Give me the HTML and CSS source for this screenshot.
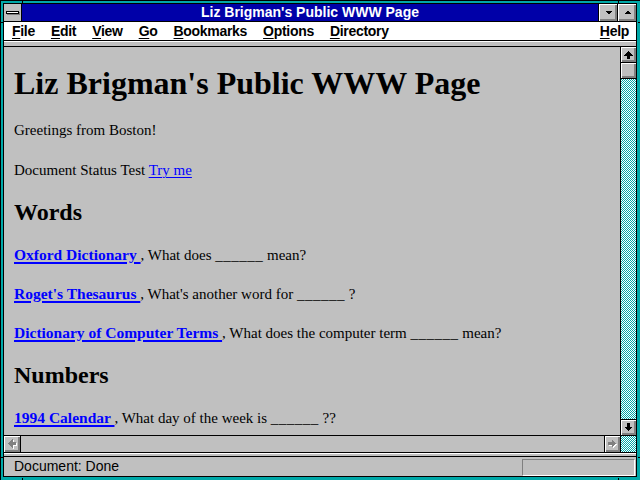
FILE: index.html
```html
<!DOCTYPE html>
<html lang="en">
<head>
  <meta charset="UTF-8">
  <meta name="viewport" content="width=device-width, initial-scale=1.0">
  <title>Liz Brigman's Public WWW Page</title>
  <link rel="stylesheet" href="styles.css">
</head>
<body>
  <svg class="defs">
    <pattern id="dither" width="2" height="2" patternUnits="userSpaceOnUse">
      <rect width="2" height="2" fill="#fff"/>
      <rect width="1" height="1" fill="#00a8a8"/>
      <rect x="1" y="1" width="1" height="1" fill="#00a8a8"/>
    </pattern>
  </svg>

  <div class="window">
    <span class="mark mark-v" style="left: 21px; top: 0;"></span>
    <span class="mark mark-v" style="left: 617px; top: 0;"></span>
    <span class="mark mark-v" style="left: 21px; top: 477px;"></span>
    <span class="mark mark-v" style="left: 617px; top: 477px;"></span>
    <span class="mark mark-h" style="left: 0; top: 21px;"></span>
    <span class="mark mark-h" style="left: 637px; top: 21px;"></span>
    <span class="mark mark-h" style="left: 0; top: 456px;"></span>
    <span class="mark mark-h" style="left: 637px; top: 456px;"></span>

    <div class="frame">
      <div class="titlebar">
        <div class="sysbox"><div class="sysbar"></div></div>
        <div class="title">Liz Brigman's Public WWW Page</div>
        <div class="tbtn">
          <svg width="17" height="17" viewBox="0 0 17 17" shape-rendering="crispEdges">
            <polygon points="5,7 12,7 8.5,10.5" fill="#000"/>
          </svg>
        </div>
        <div class="tbtn">
          <svg width="17" height="17" viewBox="0 0 17 17" shape-rendering="crispEdges">
            <polygon points="5,10 12,10 8.5,6.5" fill="#000"/>
          </svg>
        </div>
      </div>

      <div class="menubar">
        <span><u>F</u>ile</span>
        <span><u>E</u>dit</span>
        <span><u>V</u>iew</span>
        <span><u>G</u>o</span>
        <span><u>B</u>ookmarks</span>
        <span><u>O</u>ptions</span>
        <span><u>D</u>irectory</span>
        <span class="help"><u>H</u>elp</span>
      </div>
      <div class="strip"></div>

      <div class="main">
        <div class="content">
          <h1>Liz Brigman's Public WWW Page</h1>
          <p>Greetings from Boston!</p>
          <p class="status-test">Document Status Test <a href="#" class="plain">Try me</a></p>
          <h2>Words</h2>
          <p><a href="#">Oxford Dictionary </a>, What does <span class="blank">______</span> mean?</p>
          <p><a href="#">Roget's Thesaurus </a>, What's another word for <span class="blank">______</span> ?</p>
          <p><a href="#">Dictionary of Computer Terms </a>, What does the computer term <span class="blank">______</span> mean?</p>
          <h2>Numbers</h2>
          <p><a href="#">1994 Calendar </a>, What day of the week is <span class="blank">______</span> ??</p>
        </div>
        <div class="vscroll">
          <div class="sbtn up">
            <svg width="15" height="15" viewBox="0 0 15 15" shape-rendering="crispEdges">
              <polygon points="7.5,4 12,8.5 9,8.5 9,12 6,12 6,8.5 3,8.5" fill="#000"/>
            </svg>
          </div>
          <div class="thumb"></div>
          <svg class="track"><rect width="100%" height="100%" fill="url(#dither)"/></svg>
          <div class="sbtn down">
            <svg width="15" height="15" viewBox="0 0 15 15" shape-rendering="crispEdges">
              <polygon points="7.5,11 12,6.5 9,6.5 9,3 6,3 6,6.5 3,6.5" fill="#000"/>
            </svg>
          </div>
        </div>
      </div>

      <div class="hscroll">
        <div class="sbtn left">
          <svg width="16" height="16" viewBox="0 0 16 16" shape-rendering="crispEdges">
            <polygon points="5,8.5 9.5,4 9.5,7 13,7 13,10 9.5,10 9.5,13" fill="#fff"/>
            <polygon points="4,7.5 8.5,3 8.5,6 12,6 12,9 8.5,9 8.5,12" fill="#808080"/>
          </svg>
        </div>
        <div class="htrack"></div>
        <div class="sbtn right">
          <svg width="15" height="16" viewBox="0 0 15 16" shape-rendering="crispEdges">
            <polygon points="12,8.5 7.5,4 7.5,7 4,7 4,10 7.5,10 7.5,13" fill="#fff"/>
            <polygon points="11,7.5 6.5,3 6.5,6 3,6 3,9 6.5,9 6.5,12" fill="#808080"/>
          </svg>
        </div>
        <svg class="corner"><rect width="100%" height="100%" fill="url(#dither)"/></svg>
      </div>
      <div class="strip2"></div>

      <div class="status">
        <span class="status-text">Document: Done</span>
        <div class="progress"></div>
      </div>
    </div>
  </div>
</body>
</html>
```

FILE: styles.css
```css
* {
  padding: 0;
  margin: 0;
  box-sizing: border-box;
}
html, body {
  width: 640px;
  height: 480px;
  overflow: hidden;
}
body {
  background: #00a8a8;
  font-family: "Liberation Sans", Arial, sans-serif;
}
.defs {
  position: absolute;
  width: 0;
  height: 0;
}

.window {
  position: relative;
  display: flex;
  width: 640px;
  height: 480px;
  border-left: 1px solid #000;
  border-top: 1px solid #000;
  padding: 2px 3px 3px 2px;
  background: #00a8a8;
}
.mark {
  position: absolute;
  background: #000;
}
.mark-v {
  width: 1px;
  height: 3px;
}
.mark-h {
  width: 3px;
  height: 1px;
}

.frame {
  flex: 1;
  display: flex;
  flex-direction: column;
  border: 1px solid #000;
  background: #c0c0c0;
}

/* title bar */
.titlebar {
  display: flex;
  height: 18px;
  border-bottom: 1px solid #000;
  background: #0000a8;
}
.sysbox {
  width: 18px;
  border-right: 1px solid #000;
  background: #c0c0c0;
  padding: 7px 0 0 2px;
}
.sysbar {
  width: 13px;
  height: 3px;
  background: #fff;
  border: 1px solid #000;
  box-shadow: 1px 1px #808080;
}
.title {
  flex: 1;
  color: #fff;
  font-weight: bold;
  font-size: 14px;
  line-height: 17px;
  text-align: center;
}
.tbtn {
  width: 19px;
  border-left: 1px solid #000;
  background: #c0c0c0;
  box-shadow: inset 1px 1px #fff, inset -1px -1px #808080, inset -2px -2px #808080;
}
.tbtn svg {
  display: block;
  margin-left: 1px;
}

/* menu */
.menubar {
  display: flex;
  gap: 16px;
  height: 19px;
  padding: 0 7px 0 8px;
  border-bottom: 1px solid #000;
  background: #fff;
  font-weight: bold;
  font-size: 14px;
  line-height: 18px;
  letter-spacing: -0.3px;
}
.menubar u {
  text-underline-offset: 2px;
}
.menubar .help {
  margin-left: auto;
}
.strip {
  height: 6px;
  border-top: 1px solid #fff;
  border-bottom: 1px solid #000;
}

/* page area */
.main {
  display: flex;
  height: 389px;
  border-bottom: 1px solid #000;
}
.content {
  flex: 1;
  overflow: hidden;
  padding: 18px 10px 0;
  border-right: 1px solid #000;
  font-family: "Liberation Serif", "Times New Roman", serif;
  color: #000;
}
.content h1 {
  font-size: 32px;
  line-height: 36px;
}
.content h2 {
  font-size: 24px;
  line-height: 28px;
  margin-top: 18px;
}
.content p {
  font-size: 15px;
  line-height: 20px;
  margin-top: 19px;
}
.content p.status-test {
  margin-top: 20px;
}
.content h2 + p {
  margin-top: 19px;
}
.content a {
  color: #0000ff;
  font-weight: bold;
  font-size: 15.5px;
  text-decoration-thickness: 2px;
  text-underline-offset: 2px;
}
.content a.plain {
  font-weight: normal;
  font-size: 15px;
  text-decoration-thickness: 1px;
}
.blank {
  letter-spacing: 0.5px;
}

.vscroll {
  width: 15px;
  display: flex;
  flex-direction: column;
}
.sbtn {
  background: #c0c0c0;
  box-shadow: inset 1px 1px #fff, inset -1px -1px #808080, inset -2px -2px #808080;
}
.sbtn svg {
  display: block;
}
.vscroll .sbtn {
  height: 16px;
}
.vscroll .up {
  border-bottom: 1px solid #000;
}
.vscroll .down {
  border-top: 1px solid #000;
}
.thumb {
  height: 16px;
  border-bottom: 1px solid #000;
  background: #c0c0c0;
  box-shadow: inset 1px 1px #fff, inset -1px -1px #808080, inset -2px -2px #808080;
}
.track {
  display: block;
  flex: 1;
  width: 15px;
  shape-rendering: crispEdges;
}

.hscroll {
  display: flex;
  height: 17px;
  border-bottom: 1px solid #000;
}
.hscroll .left {
  width: 17px;
  border-right: 1px solid #000;
}
.hscroll .right {
  width: 17px;
  border-left: 1px solid #000;
  border-right: 1px solid #000;
}
.htrack {
  flex: 1;
}
.corner {
  display: block;
  width: 15px;
  height: 16px;
  shape-rendering: crispEdges;
}
.strip2 {
  height: 4px;
  border-top: 1px solid #fff;
  border-bottom: 1px solid #000;
}

/* status */
.status {
  flex: 1;
  display: flex;
  align-items: flex-start;
  padding: 0 1px 0 10px;
  font-size: 14px;
  line-height: 18px;
}
.status-text {
  flex: 1;
}
.progress {
  width: 113px;
  height: 17px;
  margin-top: 2px;
  border-top: 1px solid #808080;
  border-left: 1px solid #808080;
  border-bottom: 1px solid #fff;
  border-right: 1px solid #fff;
}
```
